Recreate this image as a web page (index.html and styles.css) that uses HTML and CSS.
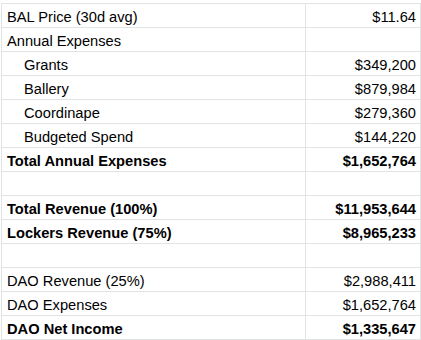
FILE: index.html
```html
<!DOCTYPE html>
<html>
<head>
<meta charset="utf-8">
<link rel="stylesheet" href="styles.css">
</head>
<body>
<div class="sheet">
  <div class="cell">BAL Price (30d avg)</div><div class="cell num">$11.64</div>
  <div class="cell">Annual Expenses</div><div class="cell num"></div>
  <div class="cell indent">Grants</div><div class="cell num">$349,200</div>
  <div class="cell indent">Ballery</div><div class="cell num">$879,984</div>
  <div class="cell indent">Coordinape</div><div class="cell num">$279,360</div>
  <div class="cell indent">Budgeted Spend</div><div class="cell num">$144,220</div>
  <div class="cell bold">Total Annual Expenses</div><div class="cell num bold">$1,652,764</div>
  <div class="cell"></div><div class="cell num"></div>
  <div class="cell bold">Total Revenue (100%)</div><div class="cell num bold">$11,953,644</div>
  <div class="cell bold">Lockers Revenue (75%)</div><div class="cell num bold">$8,965,233</div>
  <div class="cell"></div><div class="cell num"></div>
  <div class="cell">DAO Revenue (25%)</div><div class="cell num">$2,988,411</div>
  <div class="cell">DAO Expenses</div><div class="cell num">$1,652,764</div>
  <div class="cell bold">DAO Net Income</div><div class="cell num bold">$1,335,647</div>
</div>
</body>
</html>
```
FILE: styles.css
```css
html, body {
  margin: 0;
  padding: 0;
  background: #ffffff;
}
body {
  padding: 3px 0 0 1px;
  font-family: "Liberation Sans", Arial, sans-serif;
  font-size: 14.67px;
  color: #000000;
}
.sheet {
  display: grid;
  grid-template-columns: 303px 114px;
  grid-auto-rows: 23px;
  gap: 1px;
  padding: 1px;
  width: 418px;
  background: #e2e3e3;
}
.cell {
  background: #ffffff;
  display: flex;
  align-items: flex-end;
  padding: 0 4px 2px 5px;
  line-height: 16px;
  white-space: nowrap;
  overflow: hidden;
}
.indent {
  padding-left: 22px;
}
.num {
  justify-content: flex-end;
}
.bold {
  font-weight: bold;
}
```
